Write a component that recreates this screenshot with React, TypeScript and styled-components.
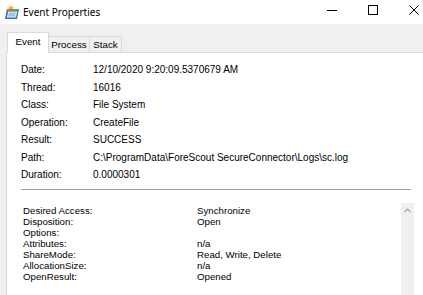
import React from "react";
import styled, { createGlobalStyle } from "styled-components";

const Global = createGlobalStyle`
  html, body { margin: 0; padding: 0; background: #ffffff; overflow: hidden; }
  body { width: 423px; height: 295px; }
  #root { width: 423px; height: 295px; overflow: hidden; }
`;

const UI = `"Liberation Sans", Arial, sans-serif`;

const Window = styled.div`
  width: 434px;
  height: 295px;
  display: flex;
  flex-direction: column;
  font-family: ${UI};
  font-size: 10px;
  color: #000;
`;

const TitleBar = styled.div`
  height: 24px;
  flex: none;
  background: #ffffff;
  display: flex;
  align-items: center;
`;

const AppIcon = styled.svg`
  width: 16px;
  height: 14px;
  margin-left: 4px;
  margin-top: 1px;
  flex: none;
`;

const Title = styled.span`
  font-family: "Noto Sans", "Liberation Sans", sans-serif;
  font-size: 10px;
  margin-left: 3px;
  margin-top: -1px;
  flex: 1;
  color: #000;
`;

const Controls = styled.div`
  display: flex;
  height: 100%;
`;

const CtlButton = styled.div`
  width: 41px;
  height: 100%;
  display: flex;
  align-items: center;
  justify-content: center;
  margin-top: -2px;
`;

const Body = styled.div`
  flex: 1;
  background: #f0f0f0;
  padding: 9px 0 0 6px;
  display: flex;
  flex-direction: column;
  min-height: 0;
`;

const TabStrip = styled.div`
  display: flex;
  align-items: flex-end;
  height: 20px;
  padding-left: 1px;
  position: relative;
  z-index: 1;
`;

const Tab = styled.div<{ $active?: boolean; $w: number }>`
  box-sizing: border-box;
  height: ${(p) => (p.$active ? "21px" : "17px")};
  width: ${(p) => p.$w}px;
  background: ${(p) => (p.$active ? "#ffffff" : "#f0f0f0")};
  border: 1px solid #d9d9d9;
  border-bottom: ${(p) => (p.$active ? "none" : "1px solid #d9d9d9")};
  margin-left: ${(p) => (p.$active ? "0" : "-1px")};
  display: flex;
  align-items: center;
  justify-content: center;
  padding-bottom: ${(p) => (p.$active ? "3px" : "0")};
  font-size: 9.8px;
  &:first-child { margin-left: 0; }
`;

const Panel = styled.div`
  flex: 1;
  background: #ffffff;
  border: 1px solid #d9d9d9;
  border-bottom: none;
  margin-top: -1px;
  padding: 8px 0 0 13px;
  display: flex;
  flex-direction: column;
  min-height: 0;
`;

const InfoGrid = styled.div`
  display: grid;
  grid-template-columns: 72px 1fr;
  grid-auto-rows: 17.5px;
  align-items: center;
  padding-left: 1px;
`;

const Label = styled.span`
  white-space: nowrap;
`;

const Value = styled.span`
  white-space: nowrap;
`;

const Separator = styled.div`
  width: 390px;
  height: 1px;
  background: #a0a0a0;
  margin: 5px 0 0 1px;
`;

const Details = styled.div`
  display: flex;
  margin: 13px 0 0 1px;
  width: 393px;
  flex: 1;
  min-height: 0;
`;

const DetailGrid = styled.div`
  flex: 1;
  display: grid;
  grid-template-columns: 174px 1fr;
  grid-auto-rows: 11.1px;
  align-items: center;
  padding: 2px 0 0 2px;
  line-height: 11px;
  font-size: 9.7px;
`;

const ScrollBar = styled.div`
  width: 13px;
  background: #f0f0f0;
  display: flex;
  justify-content: center;
  padding-top: 5px;
  box-sizing: border-box;
`;

const info: [string, string][] = [
  ["Date:", "12/10/2020 9:20:09.5370679 AM"],
  ["Thread:", "16016"],
  ["Class:", "File System"],
  ["Operation:", "CreateFile"],
  ["Result:", "SUCCESS"],
  ["Path:", "C:\\ProgramData\\ForeScout SecureConnector\\Logs\\sc.log"],
  ["Duration:", "0.0000301"],
];

const details: [string, string][] = [
  ["Desired Access:", "Synchronize"],
  ["Disposition:", "Open"],
  ["Options:", ""],
  ["Attributes:", "n/a"],
  ["ShareMode:", "Read, Write, Delete"],
  ["AllocationSize:", "n/a"],
  ["OpenResult:", "Opened"],
];

export default function App() {
  return (
    <>
      <Global />
      <Window>
        <TitleBar>
          <AppIcon viewBox="0 0 16 14">
            <path d="M3 3 L15 3 L13 13 L1 13 Z" fill="#3a6fb8" />
            <path d="M4.2 5.5 L13.3 5.5 L11.9 11.6 L2.8 11.6 Z" fill="#dfeefb" />
            <path d="M5 6.5 L12 6.5 L11 10.6 L4 10.6 Z" fill="#9cc4ea" />
            <path d="M3 3 L9 3 L8.6 5 L2.6 5 Z" fill="#e8632a" />
            <path d="M9 3 L15 3 L14.6 5 L8.6 5 Z" fill="#4caf3c" />
            <path d="M5 0.5 L9.5 0.5 L9 3 L4.5 3 Z" fill="#f2b233" />
          </AppIcon>
          <Title>Event Properties</Title>
          <Controls>
            <CtlButton>
              <svg width="10" height="10" viewBox="0 0 10 10">
                <path d="M0 5.5 H10" stroke="#000" strokeWidth="1" />
              </svg>
            </CtlButton>
            <CtlButton>
              <svg width="10" height="10" viewBox="0 0 10 10">
                <rect x="0.5" y="0.5" width="9" height="9" fill="none" stroke="#000" strokeWidth="1" />
              </svg>
            </CtlButton>
            <CtlButton>
              <svg width="10" height="10" viewBox="0 0 10 10">
                <path d="M0.5 0.5 L9.5 9.5 M9.5 0.5 L0.5 9.5" stroke="#000" strokeWidth="1" />
              </svg>
            </CtlButton>
          </Controls>
        </TitleBar>
        <Body>
          <TabStrip>
            <Tab $active $w={42}>Event</Tab>
            <Tab $w={42}>Process</Tab>
            <Tab $w={33}>Stack</Tab>
          </TabStrip>
          <Panel>
            <InfoGrid>
              {info.map(([l, v]) => (
                <React.Fragment key={l}>
                  <Label>{l}</Label>
                  <Value>{v}</Value>
                </React.Fragment>
              ))}
            </InfoGrid>
            <Separator />
            <Details>
              <DetailGrid>
                {details.map(([l, v]) => (
                  <React.Fragment key={l}>
                    <Label>{l}</Label>
                    <Value>{v}</Value>
                  </React.Fragment>
                ))}
              </DetailGrid>
              <ScrollBar>
                <svg width="7" height="5" viewBox="0 0 7 5">
                  <path d="M0.5 4 L3.5 1 L6.5 4" fill="none" stroke="#a3a3a3" strokeWidth="1.2" />
                </svg>
              </ScrollBar>
            </Details>
          </Panel>
        </Body>
      </Window>
    </>
  );
}
